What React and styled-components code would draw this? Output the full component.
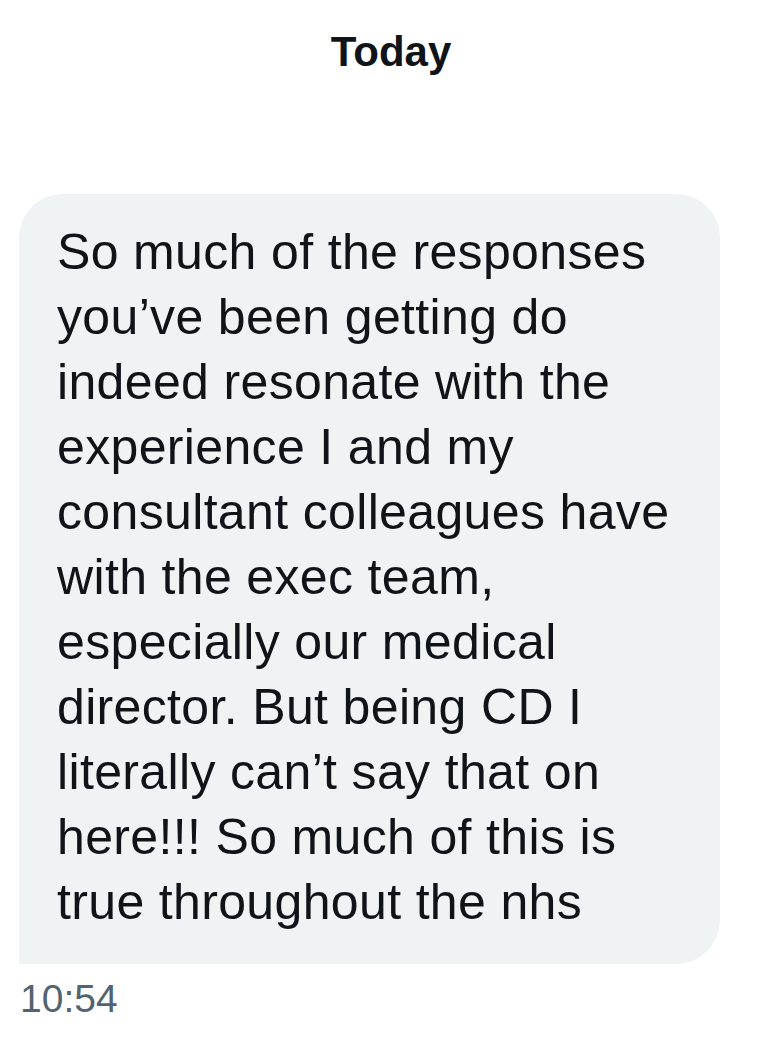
import React from "react";
import styled, { createGlobalStyle } from "styled-components";

const GlobalStyle = createGlobalStyle`
  body {
    margin: 0;
    background: #ffffff;
    font-family: "Liberation Sans", Arial, sans-serif;
  }
`;

const Thread = styled.div`
  display: flex;
  flex-direction: column;
  width: 760px;
  min-height: 1050px;
  background: #ffffff;
`;

const DayHeader = styled.div`
  padding: 27px 0 0 22px;
  text-align: center;
  font-size: 42px;
  line-height: 50px;
  font-weight: 700;
  color: #0f1419;
`;

const Bubble = styled.div`
  margin: 117px 0 0 19px;
  width: 701px;
  box-sizing: border-box;
  padding: 26px 38px 29px 38px;
  background: #eff3f4;
  border-radius: 44px 44px 44px 0;
  color: #0f1419;
  font-size: 50px;
  line-height: 65px;
  letter-spacing: 0.35px;
`;

const Line = styled.div`
  white-space: nowrap;
`;

const Time = styled.div`
  margin-top: 13px;
  padding-left: 20px;
  font-size: 39px;
  line-height: 44px;
  color: #536471;
`;

const lines = [
  "So much of the responses",
  "you’ve been getting do",
  "indeed resonate with the",
  "experience I and my",
  "consultant colleagues have",
  "with the exec team,",
  "especially our medical",
  "director. But being CD I",
  "literally can’t say that on",
  "here!!! So much of this is",
  "true throughout the nhs",
];

export default function App() {
  return (
    <>
      <GlobalStyle />
      <Thread>
        <DayHeader>Today</DayHeader>
        <Bubble>
          {lines.map((l) => (
            <Line key={l}>{l}</Line>
          ))}
        </Bubble>
        <Time>10:54</Time>
      </Thread>
    </>
  );
}
